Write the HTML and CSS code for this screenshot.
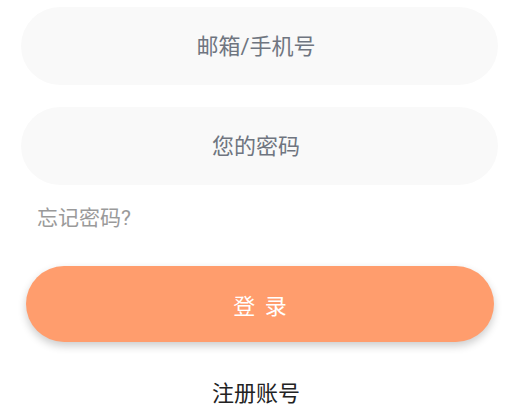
FILE: index.html
```html
<!DOCTYPE html>
<html lang="zh-CN">
<head>
<meta charset="utf-8">
<link rel="stylesheet" href="styles.css">
</head>
<body>
<form class="login">
  <input class="field" type="text" placeholder="邮箱/手机号">
  <input class="field field-pwd" type="password" placeholder="您的密码">
  <a class="forgot" href="#">忘记密码?</a>
  <button class="submit" type="button">登 录</button>
  <a class="register" href="#">注册账号</a>
</form>
</body>
</html>
```
FILE: styles.css
```css
html, body {
  margin: 0;
  padding: 0;
  background: #ffffff;
}
body {
  font-family: Roboto, "Noto Sans CJK SC", sans-serif;
}
.login {
  display: flex;
  flex-direction: column;
  padding: 7px 32px 0 21px;
}
.field {
  box-sizing: border-box;
  height: 78px;
  border: none;
  outline: none;
  border-radius: 39px;
  background: #f9f9f9;
  text-align: center;
  font-family: inherit;
  font-size: 22px;
  color: #333;
  padding: 0 7px 0 0;
}
.field::placeholder {
  color: #6f7580;
}
.field-pwd {
  margin-top: 22px;
}
.forgot {
  align-self: flex-start;
  margin: 18px 0 0 16px;
  font-size: 21px;
  line-height: 30px;
  color: #9a9a9a;
  text-decoration: none;
}
.submit {
  box-sizing: border-box;
  margin: 33px 4px 0 5px;
  height: 76px;
  border: none;
  border-radius: 38px;
  background: #ff9d6d;
  color: #ffffff;
  font-family: inherit;
  font-size: 22px;
  letter-spacing: 2px;
  box-shadow: 0 4px 8px rgba(0, 0, 0, 0.2);
  padding: 0 0 0 2px;
}
.register {
  align-self: center;
  margin: 37px 7px 0 0;
  font-size: 22px;
  line-height: 30px;
  color: #222;
  text-decoration: none;
}
```
